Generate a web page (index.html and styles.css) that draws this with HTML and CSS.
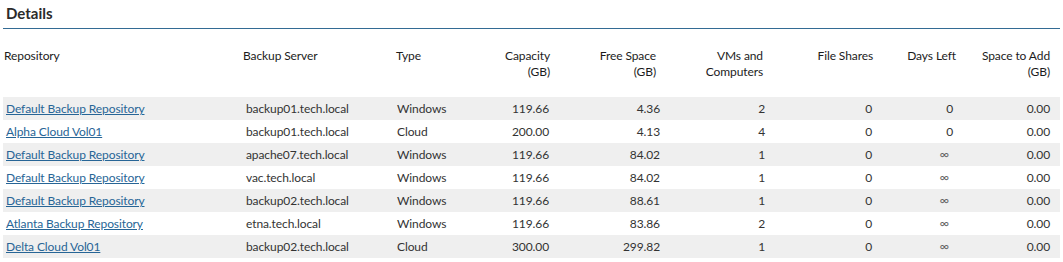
FILE: index.html
```html
<!DOCTYPE html>
<html lang="en">
<head>
<meta charset="utf-8">
<title>Details</title>
<link rel="stylesheet" href="styles.css">
</head>
<body>
<div class="panel">
  <div class="title">Details</div>
  <div class="head">
    <div class="hc l">Repository</div>
    <div class="hc l">Backup Server</div>
    <div class="hc l">Type</div>
    <div class="hc r">Capacity<br>(GB)</div>
    <div class="hc r">Free Space<br>(GB)</div>
    <div class="hc r">VMs and<br>Computers</div>
    <div class="hc r">File Shares</div>
    <div class="hc r">Days Left</div>
    <div class="hc r">Space to Add<br>(GB)</div>
  </div>
  <div class="rows">
    <div class="row alt">
      <div class="c l"><a href="#">Default Backup Repository</a></div>
      <div class="c l">backup01.tech.local</div>
      <div class="c l">Windows</div>
      <div class="c r">119.66</div>
      <div class="c r">4.36</div>
      <div class="c r">2</div>
      <div class="c r">0</div>
      <div class="c r">0</div>
      <div class="c r">0.00</div>
    </div>
    <div class="row">
      <div class="c l"><a href="#">Alpha Cloud Vol01</a></div>
      <div class="c l">backup01.tech.local</div>
      <div class="c l">Cloud</div>
      <div class="c r">200.00</div>
      <div class="c r">4.13</div>
      <div class="c r">4</div>
      <div class="c r">0</div>
      <div class="c r">0</div>
      <div class="c r">0.00</div>
    </div>
    <div class="row alt">
      <div class="c l"><a href="#">Default Backup Repository</a></div>
      <div class="c l">apache07.tech.local</div>
      <div class="c l">Windows</div>
      <div class="c r">119.66</div>
      <div class="c r">84.02</div>
      <div class="c r">1</div>
      <div class="c r">0</div>
      <div class="c r inf">∞</div>
      <div class="c r">0.00</div>
    </div>
    <div class="row">
      <div class="c l"><a href="#">Default Backup Repository</a></div>
      <div class="c l">vac.tech.local</div>
      <div class="c l">Windows</div>
      <div class="c r">119.66</div>
      <div class="c r">84.02</div>
      <div class="c r">1</div>
      <div class="c r">0</div>
      <div class="c r inf">∞</div>
      <div class="c r">0.00</div>
    </div>
    <div class="row alt">
      <div class="c l"><a href="#">Default Backup Repository</a></div>
      <div class="c l">backup02.tech.local</div>
      <div class="c l">Windows</div>
      <div class="c r">119.66</div>
      <div class="c r">88.61</div>
      <div class="c r">1</div>
      <div class="c r">0</div>
      <div class="c r inf">∞</div>
      <div class="c r">0.00</div>
    </div>
    <div class="row">
      <div class="c l"><a href="#">Atlanta Backup Repository</a></div>
      <div class="c l">etna.tech.local</div>
      <div class="c l">Windows</div>
      <div class="c r">119.66</div>
      <div class="c r">83.86</div>
      <div class="c r">2</div>
      <div class="c r">0</div>
      <div class="c r inf">∞</div>
      <div class="c r">0.00</div>
    </div>
    <div class="row alt">
      <div class="c l"><a href="#">Delta Cloud Vol01</a></div>
      <div class="c l">backup02.tech.local</div>
      <div class="c l">Cloud</div>
      <div class="c r">300.00</div>
      <div class="c r">299.82</div>
      <div class="c r">1</div>
      <div class="c r">0</div>
      <div class="c r inf">∞</div>
      <div class="c r">0.00</div>
    </div>
  </div>
</div>
</body>
</html>
```

FILE: styles.css
```css
html, body {
  margin: 0;
  padding: 0;
  background: #ffffff;
}

body {
  font-family: Lato, "Liberation Sans", Arial, sans-serif;
  font-size: 12px;
  letter-spacing: -0.1px;
  color: #333333;
}

.panel {
  padding: 0 3px;
  width: 1057px;
}

.title {
  font-size: 15px;
  font-weight: 700;
  letter-spacing: 0;
  color: #2b2b2b;
  line-height: 26px;
  padding: 0 0 2px 3px;
  border-bottom: 1px solid #336b94;
}

.head {
  display: grid;
  grid-template-columns: 239px 153px 85px 70px 106px 107px 110px 83px 94px;
  padding: 19px 10px 17px 0;
  line-height: 16px;
  color: #1c1c1c;
  font-weight: 400;
}

.hc {
  white-space: nowrap;
}

.hc.l { text-align: left; padding-left: 1px; }
.hc.r { text-align: right; }

.row {
  display: grid;
  grid-template-columns: 240px 151px 86px 72px 111px 105px 107px 81px 104px;
  height: 23px;
  line-height: 23px;
}

.row.alt {
  background: #efefef;
}

.c {
  white-space: nowrap;
}

.c.l { text-align: left; padding-left: 3px; }
.c.r { text-align: right; padding-right: 3px; }
.row .c.r:last-child { padding-right: 10px; }

.c.r.inf {
  color: #666666;
  font-size: 13px;
  padding-right: 7px;
}

a {
  color: #276596;
  text-decoration: underline;
}
```
